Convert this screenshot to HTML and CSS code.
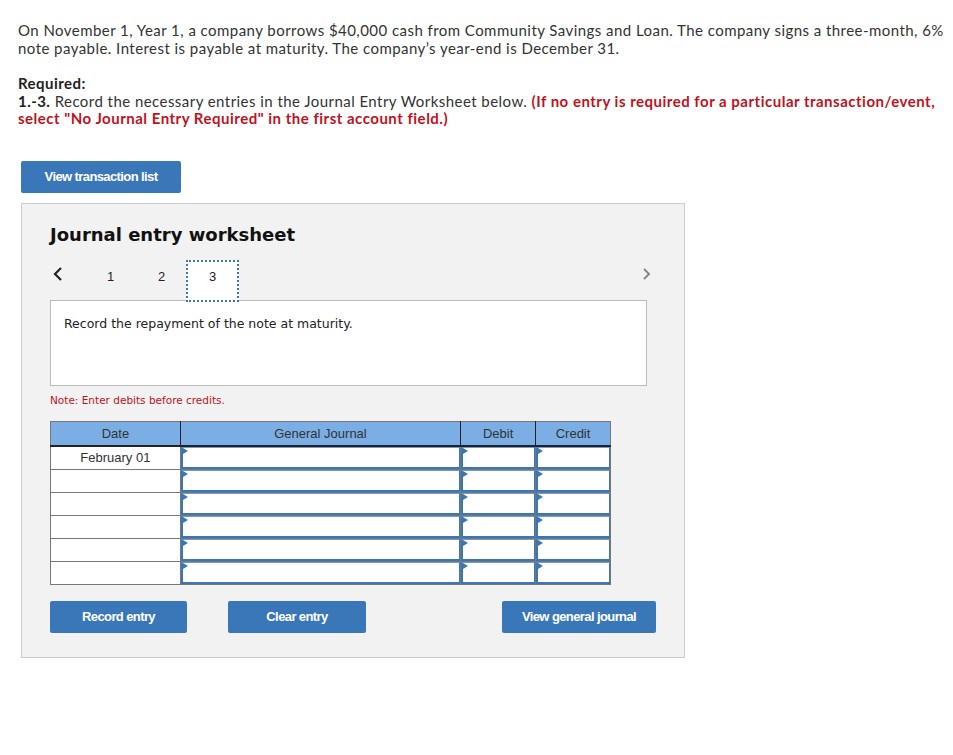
FILE: index.html
```html
<!DOCTYPE html>
<html lang="en">
<head>
    <meta charset="UTF-8">
    <title>Journal entry worksheet</title>
    <link rel="stylesheet" href="styles.css">
</head>
<body>
    <div class="page">
        <p class="intro">On November 1, Year 1, a company borrows $40,000 cash from Community Savings and Loan. The company signs a three-month, 6% note payable. Interest is payable at maturity. The company’s year-end is December 31.</p>
        <p class="required">
            <b>Required:</b><br>
            <b>1.-3.</b> Record the necessary entries in the Journal Entry Worksheet below. <span class="warn">(If no entry is required for a particular transaction/event, select "No Journal Entry Required" in the first account field.)</span>
        </p>
        <button class="btn list-btn">View transaction list</button>

        <div class="worksheet">
            <h2>Journal entry worksheet</h2>
            <div class="tabs">
                <span class="chev prev">
                    <svg width="12" height="16" viewBox="0 0 12 16"><path d="M9 2 L3 8 L9 14" fill="none" stroke="#222" stroke-width="2.2"/></svg>
                </span>
                <span class="tab">1</span>
                <span class="tab">2</span>
                <span class="tab active">3</span>
                <span class="chev next">
                    <svg width="10" height="14" viewBox="0 0 10 14"><path d="M2 2 L7 7 L2 12" fill="none" stroke="#888" stroke-width="2"/></svg>
                </span>
            </div>
            <div class="desc">Record the repayment of the note at maturity.</div>
            <p class="note">Note: Enter debits before credits.</p>

            <table class="journal">
                <thead>
                    <tr>
                        <th class="c-date">Date</th>
                        <th class="c-acct">General Journal</th>
                        <th class="c-num">Debit</th>
                        <th class="c-num">Credit</th>
                    </tr>
                </thead>
                <tbody>
                    <tr>
                        <td class="date">February 01</td>
                        <td><div class="field"></div></td>
                        <td><div class="field"></div></td>
                        <td><div class="field"></div></td>
                    </tr>
                    <tr>
                        <td class="date"></td>
                        <td><div class="field"></div></td>
                        <td><div class="field"></div></td>
                        <td><div class="field"></div></td>
                    </tr>
                    <tr>
                        <td class="date"></td>
                        <td><div class="field"></div></td>
                        <td><div class="field"></div></td>
                        <td><div class="field"></div></td>
                    </tr>
                    <tr>
                        <td class="date"></td>
                        <td><div class="field"></div></td>
                        <td><div class="field"></div></td>
                        <td><div class="field"></div></td>
                    </tr>
                    <tr>
                        <td class="date"></td>
                        <td><div class="field"></div></td>
                        <td><div class="field"></div></td>
                        <td><div class="field"></div></td>
                    </tr>
                    <tr>
                        <td class="date"></td>
                        <td><div class="field"></div></td>
                        <td><div class="field"></div></td>
                        <td><div class="field"></div></td>
                    </tr>
                </tbody>
            </table>

            <div class="actions">
                <button class="btn record-btn">Record entry</button>
                <button class="btn clear-btn">Clear entry</button>
                <button class="btn journal-btn">View general journal</button>
            </div>
        </div>
    </div>
</body>
</html>
```

FILE: styles.css
```css
body {
    margin: 0;
    background: #fff;
    color: #333;
    font-family: Lato, "Open Sans", sans-serif;
}

.page {
    padding: 22px 0 0 18px;
}

.intro,
.required {
    margin: 0;
    font-size: 15px;
    line-height: 17.5px;
    letter-spacing: 0.45px;
    width: 935px;
}

.required {
    margin-top: 18px;
}

.required b {
    color: #222;
}

.warn {
    color: #c0121d;
    font-weight: bold;
    letter-spacing: 0.5px;
}

/* buttons */
.btn {
    display: block;
    border: none;
    border-radius: 2px;
    background: #3a77b9;
    color: #fff;
    font-family: "Liberation Sans", Arial, sans-serif;
    font-weight: bold;
    font-size: 13px;
    letter-spacing: -0.6px;
    height: 32px;
    padding: 0;
}

.list-btn {
    width: 160px;
    margin: 33px 0 0 3px;
}

/* worksheet panel */
.worksheet {
    width: 606px;
    margin: 10px 0 0 3px;
    padding: 20px 28px 24px 28px;
    background: #f2f2f2;
    border: 1px solid #ccc;
}

.worksheet h2 {
    margin: 0;
    font-family: "DejaVu Sans", Verdana, sans-serif;
    font-size: 18px;
    line-height: 22px;
    color: #111;
}

.tabs {
    display: flex;
    align-items: flex-start;
    height: 40px;
    margin-top: 14px;
}

.chev {
    display: flex;
    align-items: center;
    height: 28px;
}

.prev {
    width: 35px;
    padding-left: 2px;
    box-sizing: border-box;
}

.next {
    margin-left: auto;
    margin-right: 4px;
}

.tab {
    width: 51px;
    height: 42px;
    box-sizing: border-box;
    padding-top: 9px;
    text-align: center;
    font-family: "Liberation Sans", Arial, sans-serif;
    font-size: 13px;
    color: #222;
}

.tab.active {
    background: #fff;
    border: 2px dotted #3a77b9;
    padding-top: 7px;
    width: 53px;
    margin-left: -1px;
    position: relative;
    z-index: 1;
}

.desc {
    width: 597px;
    height: 86px;
    box-sizing: border-box;
    padding: 15px 13px;
    background: #fff;
    border: 1px solid #bbb;
    font-family: "DejaVu Sans", Verdana, sans-serif;
    font-size: 12.5px;
    color: #222;
}

.note {
    margin: 7px 0 0;
    font-family: "DejaVu Sans", Verdana, sans-serif;
    font-size: 10.5px;
    line-height: 14px;
    color: #c0121d;
}

/* journal table */
.journal {
    margin-top: 14px;
    width: 561px;
    border-collapse: collapse;
    font-family: "Liberation Sans", Arial, sans-serif;
    font-size: 13px;
    color: #333;
    background: #fff;
}

.journal th {
    height: 23px;
    padding: 0;
    background: #7aaee4;
    font-weight: normal;
    border: 1px solid #777;
    border-bottom: 2px solid #222;
    border-right-color: #222;
}

.journal th:last-child {
    border-right-color: #777;
}

.c-date { width: 129px; }
.c-acct { width: 280px; }
.c-num { width: 74px; }

.journal td {
    height: 22px;
    padding: 0;
    border: 1px solid #777;
}

.journal td.date {
    text-align: center;
    vertical-align: top;
    padding-top: 3px;
    height: 19px;
}

.field {
    position: relative;
    height: 22px;
    box-sizing: border-box;
    border: 1px solid #3a77b9;
    border-left-width: 2px;
    border-bottom-width: 2px;
    border-top-color: #6d9bd0;
}

.field::before {
    content: "";
    position: absolute;
    left: 0;
    top: 0;
    border-left: 5px solid #3a77b9;
    border-top: 3px solid transparent;
    border-bottom: 3px solid transparent;
}

.actions {
    display: flex;
    margin-top: 16px;
}

.record-btn { width: 137px; }
.clear-btn { width: 138px; margin-left: 41px; }
.journal-btn { width: 154px; margin-left: auto; }
```
